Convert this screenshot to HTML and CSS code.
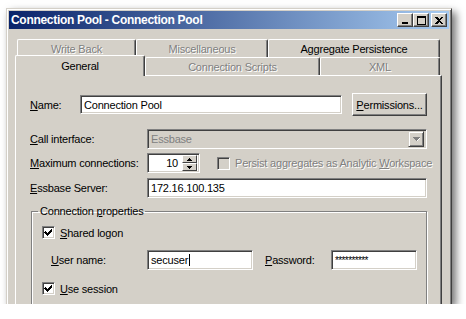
FILE: index.html
```html
<!DOCTYPE html>
<html lang="en">
<head>
    <meta charset="UTF-8">
    <title>Connection Pool - Connection Pool</title>
    <link rel="stylesheet" href="styles.css">
</head>
<body>
    <div class="window">
        <!-- Title bar -->
        <div class="titlebar">
            <span class="title">Connection Pool - Connection Pool</span>
            <div class="caption-btns">
                <span class="cbtn">
                    <svg width="8" height="8" viewBox="0 0 8 8" shape-rendering="crispEdges"><rect x="1" y="6" width="6" height="2" fill="#000"/></svg>
                </span>
                <span class="cbtn">
                    <svg width="9" height="9" viewBox="0 0 9 9" shape-rendering="crispEdges"><path d="M0 0h9v9h-9z M1 2v6h7v-6z" fill="#000" fill-rule="evenodd"/></svg>
                </span>
                <span class="cbtn close">
                    <svg width="8" height="7" viewBox="0 0 8 7" shape-rendering="crispEdges"><path d="M0 0h2l2 2 2-2h2l-3 3.5 3 3.5h-2l-2-2-2 2h-2l3-3.5z" fill="#000"/></svg>
                </span>
            </div>
        </div>

        <div class="dialog">
            <!-- Tabs -->
            <div class="tab-row back">
                <div class="tab dis w-write">Write Back</div>
                <div class="tab dis w-misc">Miscellaneous</div>
                <div class="tab w-aggr">Aggregate Persistence</div>
            </div>
            <div class="tab-row front">
                <div class="tab sel w-general">General</div>
                <div class="tab dis w-scripts">Connection Scripts</div>
                <div class="tab dis w-xml">XML</div>
            </div>

            <!-- Page -->
            <div class="page">
                <div class="row row-name">
                    <label class="lbl short"><u>N</u>ame:</label>
                    <div class="field f-name">Connection Pool</div>
                    <button class="btn"><u>P</u>ermissions...</button>
                </div>

                <div class="row row-call">
                    <label class="lbl"><u>C</u>all interface:</label>
                    <div class="field disabled f-wide">
                        <span class="grow">Essbase</span>
                        <span class="drop">
                            <svg width="7" height="5" viewBox="0 0 7 5" shape-rendering="crispEdges"><path d="M1 1h6l-3 3z" fill="#fff"/><path d="M0 0h7l-3.5 4z" fill="#808080"/></svg>
                        </span>
                    </div>
                </div>

                <div class="row row-max">
                    <label class="lbl"><u>M</u>aximum connections:</label>
                    <div class="field spin">
                        <span class="grow num">10</span>
                        <span class="spin-btns">
                            <span class="sbtn"><svg width="5" height="3" viewBox="0 0 5 3" shape-rendering="crispEdges"><path d="M2 0h1v1h1v1h1v1h-5v-1h1v-1h1z" fill="#000"/></svg></span>
                            <span class="sbtn"><svg width="5" height="3" viewBox="0 0 5 3" shape-rendering="crispEdges"><path d="M0 0h5v1h-1v1h-1v1h-1v-1h-1v-1h-1z" fill="#000"/></svg></span>
                        </span>
                    </div>
                    <span class="check off"></span>
                    <span class="check-lbl dis">Persist aggregates as Analytic <u>W</u>orkspace</span>
                </div>

                <div class="row row-ess">
                    <label class="lbl"><u>E</u>ssbase Server:</label>
                    <div class="field f-wide">172.16.100.135</div>
                </div>

                <fieldset class="group">
                    <legend>Connection <u>p</u>roperties</legend>
                    <div class="group-body">
                        <div class="row row-shared">
                            <span class="check on">
                                <svg width="9" height="9" viewBox="0 0 9 9" shape-rendering="crispEdges"><path d="M1 3h1v1h1v1h1v-1h1v-1h1v-1h1v-1h1v3h-1v1h-1v1h-1v1h-1v1h-1v-1h-1v-1h-1v-1h-1z" fill="#000"/></svg>
                            </span>
                            <span class="check-lbl"><u>S</u>hared logon</span>
                        </div>
                        <div class="row row-user">
                            <label class="lbl user"><u>U</u>ser name:</label>
                            <div class="field f-user"><span class="caret">secuser</span></div>
                            <label class="lbl pass"><u>P</u>assword:</label>
                            <div class="field f-pass"><span class="stars">**********</span></div>
                        </div>
                        <div class="row row-session">
                            <span class="check on">
                                <svg width="9" height="9" viewBox="0 0 9 9" shape-rendering="crispEdges"><path d="M1 3h1v1h1v1h1v-1h1v-1h1v-1h1v-1h1v3h-1v1h-1v1h-1v1h-1v1h-1v-1h-1v-1h-1v-1h-1z" fill="#000"/></svg>
                            </span>
                            <span class="check-lbl"><u>U</u>se session</span>
                        </div>
                    </div>
                </fieldset>
            </div>
        </div>
    </div>
</body>
</html>
```

FILE: styles.css
```css
* {
    margin: 0;
    padding: 0;
    box-sizing: border-box;
}

body {
    background: #fff;
    font-family: "Liberation Sans", Arial, sans-serif;
    font-size: 11px;
    letter-spacing: -0.2px;
    color: #000;
}

/* Window frame */
.window {
    margin: 8px 0 0 6px;
    width: 446px;
    height: 296px;
    background: #d4d0c8;
    border: 1px solid #d4d0c8;
    border-right-color: #404040;
    border-bottom: 0;
    box-shadow: inset 1px 1px #fff, inset -1px 0 #808080, 4px 4px 8px rgba(0, 0, 0, 0.55);
    padding: 2px 2px 0 2px;
    overflow: hidden;
}

.titlebar {
    height: 18px;
    display: flex;
    align-items: center;
    justify-content: space-between;
    padding: 0 2px;
    background: linear-gradient(to right, #0a246a, #a6caf0);
}

.title {
    color: #fff;
    font-weight: bold;
    font-size: 12px;
    letter-spacing: -0.3px;
}

.caption-btns {
    display: flex;
}

.cbtn {
    width: 16px;
    height: 14px;
    display: flex;
    align-items: center;
    justify-content: center;
    background: #d4d0c8;
    border: 1px solid;
    border-color: #fff #404040 #404040 #fff;
    box-shadow: inset -1px -1px #808080;
}

.cbtn svg {
    display: block;
}

.cbtn.close {
    margin-left: 2px;
}

/* Dialog body */
.dialog {
    padding: 10px 7px 0 6px;
}

.tab-row {
    display: flex;
    height: 18px;
}

.tab-row.back {
    padding-left: 2px;
}

.tab {
    height: 18px;
    display: flex;
    align-items: center;
    justify-content: center;
    background: #d4d0c8;
    border: 1px solid;
    border-color: #fff #404040 transparent #fff;
    border-bottom: 0;
    border-radius: 2px 2px 0 0;
    box-shadow: inset -1px 0 #808080;
}

.tab.dis {
    color: #808080;
    text-shadow: 1px 1px #fff;
}

.tab.sel {
    position: relative;
    z-index: 1;
    height: 21px;
    margin-top: -2px;
    padding-bottom: 1px;
}

.w-write { width: 119px; }
.w-misc { width: 132px; }
.w-aggr { width: 172px; }
.w-general { width: 130px; }
.w-scripts { width: 175px; }
.w-xml { width: 120px; }

.page {
    height: 240px;
    border: 1px solid;
    border-color: #fff #404040 transparent #fff;
    border-bottom: 0;
    box-shadow: inset -1px 0 #808080;
    padding: 17px 0 0 14px;
}

.row {
    display: flex;
    align-items: center;
}

.lbl {
    width: 117px;
}

.lbl.short {
    width: 50px;
}

.field {
    height: 20px;
    display: flex;
    align-items: center;
    background: #fff;
    border: 1px solid;
    border-color: #808080 #fff #fff #808080;
    box-shadow: inset 1px 1px #404040, inset -1px -1px #d4d0c8;
    padding: 0 0 0 3px;
    white-space: nowrap;
}

.field.disabled {
    background: #d4d0c8;
    color: #808080;
}

.grow {
    flex: 1;
}

.row-name {
    height: 23px;
}

.f-name {
    width: 262px;
    height: 19px;
}

.btn {
    width: 75px;
    height: 23px;
    margin-left: 10px;
    font: inherit;
    letter-spacing: inherit;
    color: #000;
    background: #d4d0c8;
    border: 1px solid;
    border-color: #fff #404040 #404040 #fff;
    box-shadow: inset -1px -1px #808080;
}

.row-call {
    margin-top: 13px;
}

.f-wide {
    width: 280px;
}

.drop {
    width: 16px;
    height: 16px;
    margin-right: 2px;
    display: flex;
    align-items: center;
    justify-content: center;
    background: #d4d0c8;
    border: 1px solid;
    border-color: #d4d0c8 #404040 #404040 #d4d0c8;
    box-shadow: inset 1px 1px #fff, inset -1px -1px #808080;
}

.row-max {
    margin-top: 4px;
}

.spin {
    width: 53px;
    padding-right: 2px;
}

.num {
    text-align: right;
    padding-right: 4px;
}

.spin-btns {
    display: flex;
    flex-direction: column;
    width: 15px;
    height: 16px;
}

.sbtn {
    height: 8px;
    display: flex;
    align-items: center;
    justify-content: center;
    background: #d4d0c8;
    border: 1px solid;
    border-color: #fff #404040 #404040 #fff;
}

.sbtn svg {
    display: block;
}

.check {
    width: 13px;
    height: 13px;
    display: flex;
    align-items: center;
    justify-content: center;
    background: #fff;
    border: 1px solid;
    border-color: #808080 #fff #fff #808080;
    box-shadow: inset 1px 1px #404040, inset -1px -1px #d4d0c8;
}

.check.off {
    background: #d4d0c8;
    margin-left: 17px;
}

.check-lbl {
    margin-left: 5px;
    white-space: nowrap;
}

.dis {
    color: #808080;
    text-shadow: 1px 1px #fff;
}

.row-ess {
    margin-top: 5px;
}

/* Connection properties group */
.group {
    margin: 7px 0 0 1px;
    width: 396px;
    height: 140px;
    border: 1px solid #808080;
    box-shadow: 1px 1px #fff, inset 1px 1px #fff;
    padding: 0 0 0 6px;
}

.group legend {
    padding: 0 2px;
    line-height: 13px;
}

.group-body {
    padding-left: 4px;
}

.row-shared {
    margin-top: 8px;
}

.row-user {
    margin-top: 11px;
}

.lbl.user {
    width: 96px;
    margin-left: 9px;
}

.f-user {
    width: 106px;
}

.caret {
    border-right: 1px solid #000;
    padding-right: 1px;
}

.lbl.pass {
    width: 66px;
    margin-left: 12px;
}

.f-pass {
    width: 86px;
}

.stars {
    letter-spacing: -0.6px;
    font-size: 10px;
}

.row-session {
    margin-top: 12px;
}
```
